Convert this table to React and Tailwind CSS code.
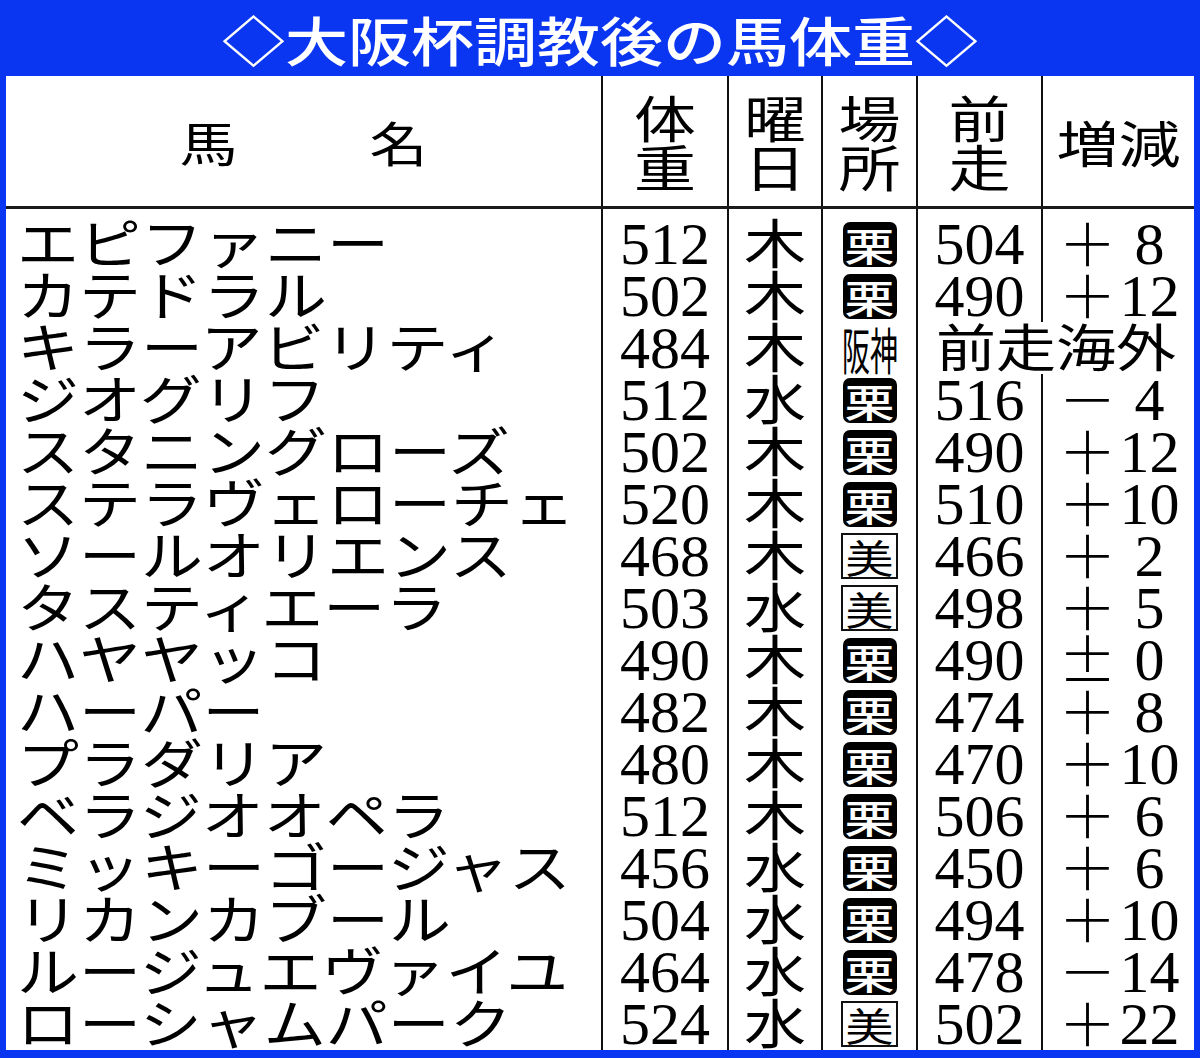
const jp = "font-['Noto_Sans_CJK_JP',sans-serif]"
const num = "font-['Liberation_Serif','Times_New_Roman',serif]"
const cols = "grid grid-cols-[595px_126px_94px_95px_125px_153px]"
const line = "border-l-2 border-[#111]"

const horses = [
  { name: "エピファニー", weight: "512", day: "木", place: "栗", prev: "504", sign: "＋", diff: "8" },
  { name: "カテドラル", weight: "502", day: "木", place: "栗", prev: "490", sign: "＋", diff: "12" },
  { name: "キラーアビリティ", weight: "484", day: "木", place: "阪神", note: "前走海外" },
  { name: "ジオグリフ", weight: "512", day: "水", place: "栗", prev: "516", sign: "－", diff: "4" },
  { name: "スタニングローズ", weight: "502", day: "木", place: "栗", prev: "490", sign: "＋", diff: "12" },
  { name: "ステラヴェローチェ", weight: "520", day: "木", place: "栗", prev: "510", sign: "＋", diff: "10" },
  { name: "ソールオリエンス", weight: "468", day: "木", place: "美", prev: "466", sign: "＋", diff: "2" },
  { name: "タスティエーラ", weight: "503", day: "水", place: "美", prev: "498", sign: "＋", diff: "5" },
  { name: "ハヤヤッコ", weight: "490", day: "木", place: "栗", prev: "490", sign: "±", diff: "0" },
  { name: "ハーパー", weight: "482", day: "木", place: "栗", prev: "474", sign: "＋", diff: "8" },
  { name: "プラダリア", weight: "480", day: "木", place: "栗", prev: "470", sign: "＋", diff: "10" },
  { name: "ベラジオオペラ", weight: "512", day: "木", place: "栗", prev: "506", sign: "＋", diff: "6" },
  { name: "ミッキーゴージャス", weight: "456", day: "水", place: "栗", prev: "450", sign: "＋", diff: "6" },
  { name: "リカンカブール", weight: "504", day: "水", place: "栗", prev: "494", sign: "＋", diff: "10" },
  { name: "ルージュエヴァイユ", weight: "464", day: "水", place: "栗", prev: "478", sign: "－", diff: "14" },
  { name: "ローシャムパーク", weight: "524", day: "水", place: "美", prev: "502", sign: "＋", diff: "22" },
]

function Place({ place }) {
  if (place === "栗") {
    return (
      <span className="flex h-[45px] w-[54px] items-center justify-center rounded-[7px] bg-black">
        <span className={`${jp} inline-block scale-y-[0.78] text-[50px] font-medium leading-[45px] text-white`}>栗</span>
      </span>
    )
  }
  if (place === "美") {
    return (
      <span className="flex h-[46px] w-[57px] items-center justify-center border-2 border-[#111]">
        <span className={`${jp} inline-block scale-y-[0.8] text-[48px] leading-[42px]`}>美</span>
      </span>
    )
  }
  return <span className={`${jp} inline-block scale-x-[0.56] whitespace-nowrap text-[50px] leading-none`}>{place}</span>
}

function HeadStack({ chars }) {
  return (
    <div className={`${line} flex items-center justify-center`}>
      <span className={`${jp} flex scale-y-[0.8] flex-col items-center text-[62px] leading-[62px]`}>
        {chars.map((c) => (
          <span key={c}>{c}</span>
        ))}
      </span>
    </div>
  )
}

function HorseRow({ h }) {
  return (
    <div className={`${cols} h-[52px]`}>
      <div className="flex items-center pl-[11px]">
        <span className={`${jp} inline-block -translate-y-[3px] scale-y-[0.86] whitespace-nowrap text-[62px] leading-[52px]`}>{h.name}</span>
      </div>
      <div className={`${line} ${num} flex items-center justify-center text-[60px] leading-[52px]`}>{h.weight}</div>
      <div className={`${line} flex items-center justify-center`}>
        <span className={`${jp} inline-block -translate-y-[3px] scale-y-[0.86] text-[62px] leading-[52px]`}>{h.day}</span>
      </div>
      <div className={`${line} flex items-center justify-center`}>
        <Place place={h.place} />
      </div>
      {h.note ? (
        <div className={`${line} col-span-2 flex items-center justify-center`}>
          <span className={`${jp} inline-block -translate-y-[3px] scale-y-[0.86] whitespace-nowrap text-[60px] leading-[52px]`}>{h.note}</span>
        </div>
      ) : (
        <>
          <div className={`${line} ${num} flex items-center justify-center text-[60px] leading-[52px]`}>{h.prev}</div>
          <div className={`${line} flex items-center justify-center`}>
            <span className={`${jp} inline-block w-[62px] -translate-y-[3px] text-center text-[58px] font-light leading-[52px]`}>{h.sign}</span>
            <span className={`${num} inline-block w-[62px] text-center text-[60px] leading-[52px]`}>{h.diff}</span>
          </div>
        </>
      )}
    </div>
  )
}

export default function App() {
  return (
    <div className="flex h-[1058px] w-[1200px] flex-col bg-[#0a36f2] px-[6px] pb-[8px] text-black">
      <div className="flex h-[76px] items-center justify-center">
        <span className={`${jp} inline-block scale-y-[0.85] whitespace-nowrap text-[63px] font-medium leading-none text-white`}>
          ◇大阪杯調教後の馬体重◇
        </span>
      </div>

      <div className="flex flex-1 flex-col bg-white">
        <div className={`${cols} h-[133px] border-b-[3px] border-[#1a1a1a]`}>
          <div className="flex items-center justify-center gap-[132px]">
            <span className={`${jp} inline-block scale-y-[0.82] text-[58px] leading-none`}>馬</span>
            <span className={`${jp} inline-block scale-y-[0.82] text-[58px] leading-none`}>名</span>
          </div>
          <HeadStack chars={["体", "重"]} />
          <HeadStack chars={["曜", "日"]} />
          <HeadStack chars={["場", "所"]} />
          <HeadStack chars={["前", "走"]} />
          <div className={`${line} flex items-center justify-center`}>
            <span className={`${jp} inline-block scale-y-[0.8] whitespace-nowrap text-[62px] leading-none`}>増減</span>
          </div>
        </div>

        <div className={`${cols} h-[9px]`}>
          <div />
          <div className={line} />
          <div className={line} />
          <div className={line} />
          <div className={line} />
          <div className={line} />
        </div>

        {horses.map((h) => (
          <HorseRow key={h.name} h={h} />
        ))}
      </div>
    </div>
  )
}
